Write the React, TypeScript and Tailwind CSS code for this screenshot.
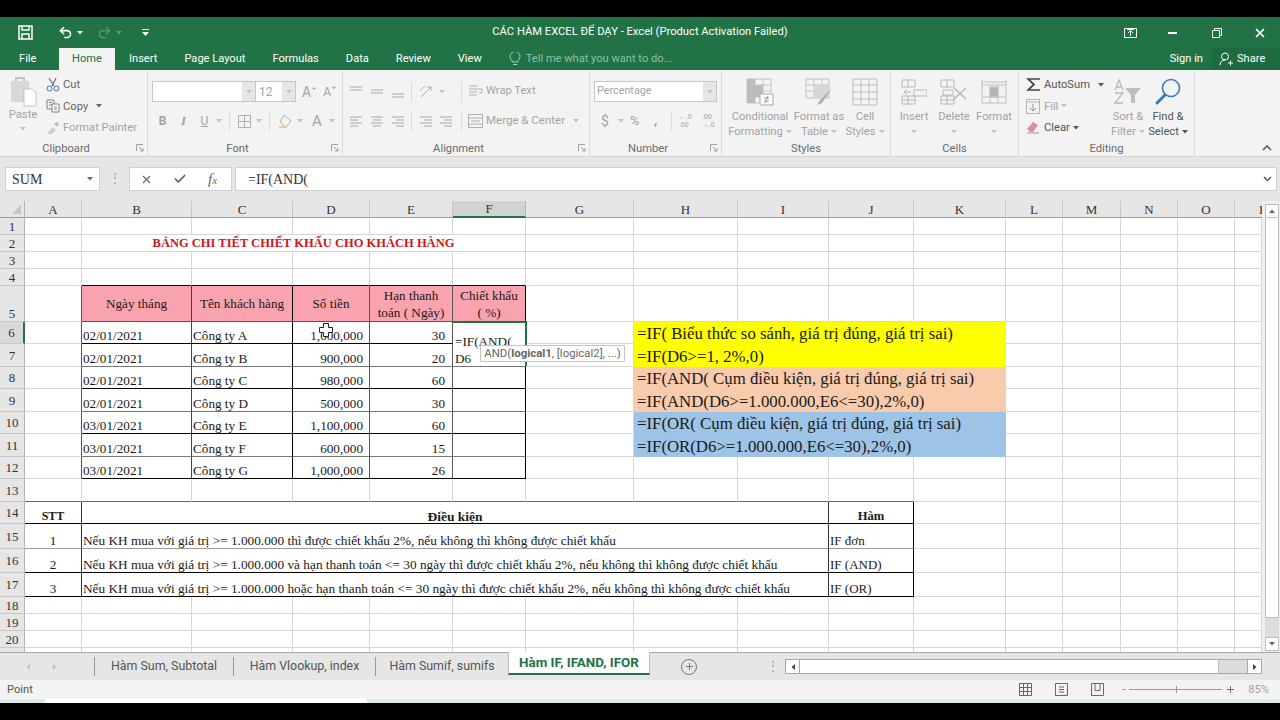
import React from "react";
import { Check, Plus, Redo2, Undo2, X } from "lucide-react";

const grid = "border-r border-b border-[#d6d6d6]";

const columns = [
  { n: "A", w: "w-[57px]" },
  { n: "B", w: "w-[110px]" },
  { n: "C", w: "w-[101px]" },
  { n: "D", w: "w-[77px]" },
  { n: "E", w: "w-[83px]" },
  { n: "F", w: "w-[73px]" },
  { n: "G", w: "w-[108px]" },
  { n: "H", w: "w-[104px]" },
  { n: "I", w: "w-[91px]" },
  { n: "J", w: "w-[85px]" },
  { n: "K", w: "w-[92px]" },
  { n: "L", w: "w-[57px]" },
  { n: "M", w: "w-[58px]" },
  { n: "N", w: "w-[57px]" },
  { n: "O", w: "w-[57px]" },
  { n: "P", w: "w-[27px]" },
];

const customers = [
  { n: 6, h: "h-[22px]", line: "border-b-black", date: "02/01/2021", name: "Công ty A", amount: "1,000,000", days: 30 },
  { n: 7, h: "h-[23px]", line: "border-b-[#777]", date: "02/01/2021", name: "Công ty B", amount: "900,000", days: 20 },
  { n: 8, h: "h-[22px]", line: "border-b-black", date: "02/01/2021", name: "Công ty C", amount: "980,000", days: 60 },
  { n: 9, h: "h-[23px]", line: "border-b-[#777]", date: "02/01/2021", name: "Công ty D", amount: "500,000", days: 30 },
  { n: 10, h: "h-[22px]", line: "border-b-black", date: "03/01/2021", name: "Công ty E", amount: "1,100,000", days: 60 },
  { n: 11, h: "h-[23px]", line: "border-b-[#777]", date: "03/01/2021", name: "Công ty F", amount: "600,000", days: 15 },
  { n: 12, h: "h-[22px]", line: "border-b-black", date: "03/01/2021", name: "Công ty G", amount: "1,000,000", days: 26 },
];

const notes: Record<number, { text: string; bg: string }> = {
  6: { text: "=IF( Biểu thức so sánh, giá trị đúng, giá trị sai)", bg: "bg-[#ffff00]" },
  7: { text: "=IF(D6>=1, 2%,0)", bg: "bg-[#ffff00]" },
  8: { text: "=IF(AND( Cụm điều kiện, giá trị đúng, giá trị sai)", bg: "bg-[#f8cbad]" },
  9: { text: "=IF(AND(D6>=1.000.000,E6<=30),2%,0)", bg: "bg-[#f8cbad]" },
  10: { text: "=IF(OR( Cụm điều kiện, giá trị đúng, giá trị sai)", bg: "bg-[#9dc3e6]" },
  11: { text: "=IF(OR(D6>=1.000.000,E6<=30),2%,0)", bg: "bg-[#9dc3e6]" },
};

const conditions = [
  { n: 15, h: "h-[25px]", line: "border-b-[#999]", stt: 1, text: "Nếu KH mua với giá trị >= 1.000.000 thì được chiết khấu 2%, nếu không thì không được chiết khấu", fn: "IF đơn" },
  { n: 16, h: "h-[24px]", line: "border-b-black", stt: 2, text: "Nếu KH mua với giá trị >= 1.000.000 và hạn thanh toán <= 30 ngày thì được chiết khấu 2%, nếu không thì không được chiết khấu", fn: "IF (AND)" },
  { n: 17, h: "h-[24px]", line: "border-b-black", stt: 3, text: "Nếu KH mua với giá trị >= 1.000.000 hoặc hạn thanh toán <= 30 ngày thì được chiết khấu 2%, nếu không thì không được chiết khấu", fn: "IF (OR)" },
];

const Caret = ({ className = "text-[#a6a6a6]" }: { className?: string }) => (
  <svg width="6" height="4" viewBox="0 0 6 4" className={`shrink-0 ${className}`}>
    <path d="M0 0h6L3 3.5z" fill="currentColor" />
  </svg>
);

const Blanks = ({ count }: { count: number }) => (
  <>
    {Array.from({ length: count }).map((_, i) => (
      <td key={i} className={grid} />
    ))}
  </>
);

const RowHead = ({ n, className = "bg-[#e6e6e6] border-r-[#b5b5b5]" }: { n: number | string; className?: string }) => (
  <th className={`font-normal text-[#333] text-[13px] leading-[15px] text-center border-r border-b border-b-[#c8c8c8] ${className}`}>
    {n}
  </th>
);

const Launcher = () => (
  <svg width="8" height="8" viewBox="0 0 8 8" className="absolute right-[3px] bottom-[4px]" fill="none" stroke="#a0a0a0">
    <path d="M.5 7V.5H7M3 3l4 4M7 4v3H4" />
  </svg>
);

const Group = ({ w, label, launcher, children }: { w: string; label: string; launcher?: boolean; children: React.ReactNode }) => (
  <div className={`${w} relative flex flex-col h-[84px] mt-[2px] border-r border-[#d9d9d9] shrink-0`}>
    <div className="flex-1 flex min-h-0">{children}</div>
    <div className={launcher ? "h-[14px] leading-[14px] text-center text-[11.2px] text-[#6b6b6b] pr-[15px]" : "h-[14px] leading-[14px] text-center text-[11.2px] text-[#6b6b6b]"}>
      {label}
    </div>
    {launcher && <Launcher />}
  </div>
);

const BigButton = ({ w, icon, lines, dim = true, arrow = false }: { w: string; icon: React.ReactNode; lines: string[]; dim?: boolean; arrow?: boolean }) => (
  <div className={`${w} flex flex-col items-center text-[11.2px] leading-[15px] ${dim ? "text-[#a3a3a3]" : "text-[#555]"}`}>
    <div className="h-[37px] pt-[2px] flex items-center justify-center shrink-0">{icon}</div>
    {lines.map((l, i) => (
      <div key={l} className="flex items-center gap-[3px] whitespace-nowrap">
        {l}
        {arrow && i === lines.length - 1 && <Caret className={dim ? "text-[#c4c4c4]" : "text-[#555]"} />}
      </div>
    ))}
    {lines.length === 1 && (
      <div className="h-[15px] flex items-center">
        <Caret className="text-[#c4c4c4]" />
      </div>
    )}
  </div>
);

const AlignIcon = ({ kind }: { kind: "top" | "mid" | "bot" | "l" | "c" | "r" }) => {
  const d = {
    top: "M1 2h12M1 5h12",
    mid: "M1 5h12M1 8h12",
    bot: "M1 9h12M1 12h12",
    l: "M1 2h12M1 5h8M1 8h12M1 11h8",
    c: "M1 2h12M3 5h8M1 8h12M3 11h8",
    r: "M1 2h12M5 5h8M1 8h12M5 11h8",
  }[kind];
  return (
    <svg width="14" height="13" viewBox="0 0 14 13" fill="none" stroke="#a8a8a8">
      <path d={d} />
    </svg>
  );
};

const Ribbon = () => (
  <div className="flex h-[87px] bg-[#f3f3f3] font-['Roboto',sans-serif] text-[#a3a3a3] border-b border-[#d4d4d4]">
    <Group w="w-[148px]" label="Clipboard" launcher>
      <div className="flex flex-col items-center w-[28px] ml-[9px] pt-[5px] text-[11.2px] leading-[16px]">
        <svg width="27" height="30" viewBox="0 0 27 30" fill="none" className="shrink-0">
          <path d="M1 4h18v21H1z" fill="#d8d8d8" />
          <path d="M6 4V1h8v3" stroke="#c4c4c4" strokeWidth="2" />
          <path d="M14 12h8l4 4v13H14z" fill="#fff" stroke="#c2c2c2" />
        </svg>
        <span>Paste</span>
        <Caret className="mt-[4px] text-[#c4c4c4]" />
      </div>
      <div className="ml-[9px] pt-[2px] flex flex-col text-[11.2px] leading-[21.5px] whitespace-nowrap">
        <div className="flex items-center gap-[3px] text-[#666]">
          <svg width="14" height="15" viewBox="0 0 14 15" fill="none">
            <path d="M3 1l5 8M10 1L6 9" stroke="#777" strokeWidth="1.3" />
            <circle cx="3.5" cy="11.5" r="2.5" stroke="#3f6fb0" />
            <circle cx="10.5" cy="11.5" r="2.5" stroke="#3f6fb0" />
          </svg>
          Cut
        </div>
        <div className="flex items-center gap-[3px] text-[#666]">
          <svg width="14" height="14" viewBox="0 0 14 14" fill="none" stroke="#808080">
            <path d="M1 1h7v9H1zM3 3.5h3M3 6h3" />
            <path d="M6 5h7v8H6z" fill="#fff" />
            <path d="M8 8h3M8 10h3" />
          </svg>
          <span>Copy</span>
          <Caret className="ml-[5px] text-[#666]" />
        </div>
        <div className="flex items-center gap-[3px]">
          <svg width="14" height="14" viewBox="0 0 14 14">
            <path d="M1 12l6-6 3 3-4 4H3z" fill="#cfcfcf" />
            <path d="M8 3l3-2 2 2-2 3z" fill="#bcbcbc" />
          </svg>
          Format Painter
        </div>
      </div>
    </Group>

    <Group w="w-[195px]" label="Font" launcher>
      <div className="flex flex-col pl-[4px] pt-[9px]">
        <div className="flex items-center h-[21px]">
          <div className="w-[104px] h-[21px] bg-white border border-[#c6c6c6] flex justify-end">
            <div className="w-[13px] bg-[#e6e6e6] flex items-center justify-center">
              <Caret className="text-[#c4c4c4]" />
            </div>
          </div>
          <div className="w-[40px] h-[21px] bg-white border border-l-0 border-[#c6c6c6] flex justify-between items-center pl-[3px] text-[12px]">
            12
            <div className="w-[13px] h-full bg-[#e6e6e6] flex items-center justify-center">
              <Caret className="text-[#c4c4c4]" />
            </div>
          </div>
          <span className="ml-[6px] text-[14px] leading-none">A</span>
          <Caret className="-mt-[8px] rotate-180 scale-75 text-[#a3a3a3]" />
          <span className="ml-[6px] text-[12px] leading-none">A</span>
          <Caret className="-mt-[8px] scale-75 text-[#a3a3a3]" />
        </div>
        <div className="flex items-center h-[22px] mt-[8px] font-bold text-[12px]">
          <span className="w-[21px] text-center">B</span>
          <span className="w-[21px] text-center italic font-['Liberation_Serif',serif] text-[13px]">I</span>
          <span className="w-[21px] text-center underline font-normal">U</span>
          <Caret className="ml-[1px] text-[#c4c4c4]" />
          <div className="w-px h-[20px] bg-[#dcdcdc] ml-[7px] mr-[8px]" />
          <svg width="13" height="13" viewBox="0 0 13 13" fill="none" stroke="#b0b0b0">
            <path d="M.5.5h12v12H.5zM6.5.5v12M.5 6.5h12" />
          </svg>
          <Caret className="ml-[5px] text-[#c4c4c4]" />
          <div className="w-px h-[20px] bg-[#dcdcdc] ml-[7px] mr-[8px]" />
          <svg width="16" height="15" viewBox="0 0 16 15" fill="none" stroke="#b0b0b0">
            <path d="M6 1l7 6-5 6-6-5z" />
            <path d="M1 13h8" stroke="#f0c9a6" strokeWidth="2" />
          </svg>
          <Caret className="ml-[3px] text-[#c4c4c4]" />
          <span className="ml-[9px] text-[15px] font-normal">A</span>
          <Caret className="ml-[7px] text-[#c4c4c4]" />
        </div>
      </div>
    </Group>

    <Group w="w-[247px]" label="Alignment" launcher>
      <div className="flex flex-col pl-[6px] pt-[9px]">
        <div className="flex items-center h-[21px]">
          <div className="flex gap-[7px]">
            <AlignIcon kind="top" />
            <AlignIcon kind="mid" />
            <AlignIcon kind="bot" />
          </div>
          <div className="w-px h-[20px] bg-[#dcdcdc] ml-[6px] mr-[7px]" />
          <svg width="15" height="15" viewBox="0 0 15 15" fill="none" stroke="#b0b0b0">
            <path d="M2 13L12 3M8 3h4v4M1 7l5-5" />
          </svg>
          <Caret className="ml-[5px] text-[#c4c4c4]" />
          <div className="w-px h-[20px] bg-[#dcdcdc] ml-[16px] mr-[6px]" />
          <svg width="15" height="13" viewBox="0 0 15 13" fill="none" stroke="#b0b0b0">
            <path d="M1 1h9M1 4h13M1 7h8M1 10h8" />
            <path d="M14 4v4h-3" />
          </svg>
          <span className="ml-[3px] text-[11.2px]">Wrap Text</span>
        </div>
        <div className="flex items-center h-[22px] mt-[8px]">
          <div className="flex gap-[7px]">
            <AlignIcon kind="l" />
            <AlignIcon kind="c" />
            <AlignIcon kind="r" />
          </div>
          <div className="w-px h-[20px] bg-[#dcdcdc] ml-[6px] mr-[7px]" />
          <div className="flex gap-[6px]">
            <AlignIcon kind="r" />
            <AlignIcon kind="r" />
          </div>
          <div className="w-px h-[20px] bg-[#dcdcdc] ml-[8px] mr-[6px]" />
          <svg width="15" height="14" viewBox="0 0 15 14" fill="none" stroke="#b0b0b0">
            <path d="M.5.5h14v13H.5zM.5 4h14M.5 10h14M3 7h9" />
          </svg>
          <span className="ml-[3px] text-[11.5px]">Merge &amp; Center</span>
          <Caret className="ml-[8px] text-[#c4c4c4]" />
        </div>
      </div>
    </Group>

    <Group w="w-[132px]" label="Number" launcher>
      <div className="flex flex-col pl-[4px] pt-[9px]">
        <div className="w-[123px] h-[21px] bg-white border border-[#c6c6c6] flex justify-between items-center pl-[2px] text-[10.8px]">
          Percentage
          <div className="w-[13px] h-full bg-[#e6e6e6] flex items-center justify-center">
            <Caret className="text-[#c4c4c4]" />
          </div>
        </div>
        <div className="flex items-center h-[22px] mt-[8px] pl-[7px] text-[13px]">
          <span className="w-[8px] text-[14px]">$</span>
          <Caret className="ml-[9px] text-[#c4c4c4]" />
          <span className="ml-[6px] w-[12px]">%</span>
          <span className="ml-[12px] w-[3px] font-bold">,</span>
          <div className="w-px h-[20px] bg-[#dcdcdc] ml-[14px] mr-[7px]" />
          <span className="text-[7px] leading-[8px] w-[15px] whitespace-nowrap">←.0<br />.00</span>
          <span className="ml-[8px] text-[7px] leading-[8px] w-[15px] whitespace-nowrap">.00<br />→.0</span>
        </div>
      </div>
    </Group>

    <Group w="w-[169px]" label="Styles">
      <BigButton
        w="w-[76px]"
        lines={["Conditional", "Formatting"]}
        arrow
        icon={
          <svg width="28" height="28" viewBox="0 0 28 28" fill="none">
            <path d="M1 1h24v24H1zM1 7h24M1 13h24M1 19h24M9 1v24M17 1v24" stroke="#c4c4c4" />
            <path d="M1 1h8v24H1zM9 7h8v12H9z" fill="#bcbcbc" />
            <path d="M14 16h13v11H14z" fill="#fff" stroke="#a8a8a8" />
            <path d="M18 20h5M18 23h5M22 18l-3 7" stroke="#999" />
          </svg>
        }
      />
      <BigButton
        w="w-[42px]"
        lines={["Format as", "Table"]}
        arrow
        icon={
          <svg width="28" height="28" viewBox="0 0 28 28" fill="none">
            <path d="M1 1h23v19H1zM1 7h23M1 13h23M9 1v19M17 1v19" stroke="#c4c4c4" />
            <path d="M9 7h15v13H9z" fill="#d6d6d6" />
            <path d="M27 10L15 22l-3 5 5-2z" fill="#b0b0b0" />
          </svg>
        }
      />
      <BigButton
        w="w-[50px]"
        lines={["Cell", "Styles"]}
        arrow
        icon={
          <svg width="26" height="28" viewBox="0 0 26 28" fill="none" stroke="#bdbdbd">
            <path d="M1 1h24v26H1zM1 7h24M1 14h24M1 21h24M9 1v26M17 1v26" />
          </svg>
        }
      />
    </Group>

    <Group w="w-[128px]" label="Cells">
      <BigButton
        w="w-[46px]"
        lines={["Insert"]}
        icon={
          <svg width="26" height="26" viewBox="0 0 26 26" fill="none" stroke="#b8b8b8">
            <path d="M1 1h13v7H1zM7 1v7M1 17h13v8H1zM1 21h13M7 17v8M13 11h13v6H13zM3 13h7M6 10l-3 3 3 3" />
          </svg>
        }
      />
      <BigButton
        w="w-[34px]"
        lines={["Delete"]}
        icon={
          <svg width="28" height="26" viewBox="0 0 28 26" fill="none" stroke="#b8b8b8">
            <path d="M1 1h13v7H1zM7 1v7M1 17h13v8H1zM1 21h13M7 17v8M3 11h10v5H3z" />
            <path d="M14 9l12 11M26 9L14 20" strokeWidth="1.6" />
          </svg>
        }
      />
      <BigButton
        w="w-[46px]"
        lines={["Format"]}
        icon={
          <svg width="26" height="28" viewBox="0 0 26 28" fill="none" stroke="#c0c0c0">
            <path d="M1 4h24M1 1v6M25 1v6M1 7h24v18H1zM9 7v18M17 7v18M1 19h24" />
            <path d="M9 9h8v10H9z" fill="#b4b4b4" />
          </svg>
        }
      />
    </Group>

    <Group w="w-[176px]" label="Editing">
      <div className="w-[86px] pl-[7px] pt-[2px] flex flex-col text-[11.2px] leading-[21.5px]">
        <div className="flex items-center text-[#555]">
          <svg width="15" height="15" viewBox="0 0 15 15" fill="none" stroke="#444" strokeWidth="1.7" className="mr-[3px]">
            <path d="M14 2H2l6 5.5L2 13h12" />
          </svg>
          AutoSum
          <Caret className="ml-[8px] text-[#555]" />
        </div>
        <div className="flex items-center">
          <svg width="14" height="15" viewBox="0 0 14 15" fill="none" stroke="#b4b4b4" className="mr-[4px]">
            <path d="M.5.5h13v14H.5zM.5 3h13" />
            <path d="M7 5v7M4 9l3 3 3-3" stroke="#7f9bb8" />
          </svg>
          Fill
          <Caret className="ml-[3px] text-[#c4c4c4]" />
        </div>
        <div className="flex items-center text-[#555]">
          <svg width="14" height="13" viewBox="0 0 14 13" className="mr-[4px]">
            <path d="M1 8l6-7 5 3-5 7H4z" fill="#e58da0" />
            <path d="M1 12h12" stroke="#999" />
          </svg>
          Clear
          <Caret className="ml-[3px] text-[#555]" />
        </div>
      </div>
      <BigButton
        w="w-[46px]"
        lines={["Sort &", "Filter"]}
        arrow
        icon={
          <svg width="28" height="26" viewBox="0 0 28 26" fill="none">
            <path d="M1 11L5 1l4 10M3 8h4M1 14h8L1 24h8" stroke="#b8b8b8" strokeWidth="1.3" />
            <path d="M11 9h16l-6 7v8h-4v-8z" fill="#bdbdbd" />
          </svg>
        }
      />
      <BigButton
        w="w-[34px]"
        lines={["Find &", "Select"]}
        dim={false}
        arrow
        icon={
          <svg width="28" height="28" viewBox="0 0 28 28" fill="none">
            <circle cx="17" cy="10" r="8.5" stroke="#3b78b8" strokeWidth="1.6" />
            <path d="M11 17l-8 8" stroke="#3b78b8" strokeWidth="3" strokeLinecap="round" />
          </svg>
        }
      />
    </Group>

    <div className="flex-1 flex items-end justify-end pb-[5px] pr-[8px]">
      <svg width="10" height="6" viewBox="0 0 10 6" fill="none" stroke="#555" strokeWidth="1.5">
        <path d="M1 5l4-4 4 4" />
      </svg>
    </div>
  </div>
);

const FormulaBar = () => (
  <div className="h-[44px] bg-[#e6e6e6] flex items-start pt-[10px] pl-[5px] pr-[3px] font-['Liberation_Serif',serif] text-[14px] text-[#333]">
    <div className="w-[95px] h-[24px] bg-white border border-[#d0d0d0] flex items-center justify-between pl-[6px] pr-[6px]">
      SUM
      <Caret className="text-[#666]" />
    </div>
    <div className="w-[29px] flex justify-center text-[#aaa] leading-[24px]">⋮</div>
    <div className="w-[103px] h-[24px] bg-white border border-[#d0d0d0] flex items-center pl-[10px] text-[#666]">
      <X size={13} />
      <Check size={14} strokeWidth={3} className="ml-[20px]" />
      <span className="ml-[21px] italic text-[15px]">
        f<span className="text-[11px]">x</span>
      </span>
    </div>
    <div className="flex-1 ml-[3px] h-[24px] bg-white border border-[#d0d0d0] flex items-center justify-between pl-[12px] pr-[4px]">
      =IF(AND(
      <svg width="9" height="6" viewBox="0 0 9 6" fill="none" stroke="#555" strokeWidth="1.5">
        <path d="M1 1l3.5 3.5L8 1" />
      </svg>
    </div>
  </div>
);

const Sheet = () => (
  <div className="h-[451px] flex bg-white overflow-hidden">
    <table className="w-[1262px] table-fixed border-separate border-spacing-0 font-['Liberation_Serif',serif] text-[13.2px] leading-[17px] text-[#1a1a1a] shrink-0 self-start">
      <colgroup>
        <col className="w-[25px]" />
        {columns.map((c) => (
          <col key={c.n} className={c.w} />
        ))}
      </colgroup>
      <thead>
        <tr className="h-[17px]">
          <th className="bg-[#e6e6e6] border-r border-b border-r-[#b5b5b5] border-b-[#9c9c9c] leading-none">
            <svg width="11" height="11" viewBox="0 0 11 11" className="ml-[11px]">
              <path d="M10 1v9H1z" fill="#c4c4c4" />
            </svg>
          </th>
          {columns.map((c) => {
            if (c.n === "F") {
              return (
                <th key={c.n} className="bg-[#d2d2d2] font-normal text-[13px] leading-none text-[#333] border-r border-b-2 border-r-[#b5b5b5] border-b-[#217346]">
                  {c.n}
                </th>
              );
            }
            if (c.n === "P") {
              // the last column runs past the scroll bar, its letter is cut in half
              return (
                <th key={c.n} className="bg-[#e6e6e6] font-normal text-[13px] leading-none text-[#333] text-left pl-[24px] overflow-hidden border-b border-b-[#9c9c9c]">
                  {c.n}
                </th>
              );
            }
            return (
              <th key={c.n} className="bg-[#e6e6e6] font-normal text-[13px] leading-none text-[#333] border-r border-b border-r-[#c6c6c6] border-b-[#9c9c9c]">
                {c.n}
              </th>
            );
          })}
        </tr>
      </thead>
      <tbody>
        <tr className="h-[17px]">
          <RowHead n={1} />
          <Blanks count={16} />
        </tr>
        <tr className="h-[17px]">
          <RowHead n={2} />
          <td className={grid} />
          <td colSpan={5} className={`${grid} text-center align-bottom font-bold text-[12.5px] leading-[16px] text-[#d0161b] whitespace-nowrap`}>
            BẢNG CHI TIẾT CHIẾT KHẤU CHO KHÁCH HÀNG
          </td>
          <Blanks count={10} />
        </tr>
        <tr className="h-[17px]">
          <RowHead n={3} />
          <Blanks count={16} />
        </tr>
        <tr className="h-[17px]">
          <RowHead n={4} />
          <td className={grid} />
          <td className="border-r border-b border-r-[#d6d6d6] border-b-black" />
          <td className="border-r border-b border-r-[#d6d6d6] border-b-black" />
          <td className="border-r border-b border-r-[#d6d6d6] border-b-black" />
          <td className="border-r border-b border-r-[#d6d6d6] border-b-black" />
          <td className="border-r border-b border-r-[#d6d6d6] border-b-black" />
          <Blanks count={10} />
        </tr>
        <tr className="h-[36px]">
          <RowHead n={5} className="bg-[#e6e6e6] border-r-[#b5b5b5] align-bottom" />
          <td className="border-r border-b border-r-[#555] border-b-[#d6d6d6]" />
          <td className="bg-[#f9a3ae] text-center border-r border-b border-r-[#444] border-b-[#555]">Ngày tháng</td>
          <td className="bg-[#f9a3ae] text-center border-r border-b border-r-black border-b-[#555]">Tên khách hàng</td>
          <td className="bg-[#f9a3ae] text-center border-r border-b border-r-[#555] border-b-[#555]">Số tiền</td>
          <td className="bg-[#f9a3ae] text-center border-r border-b border-r-[#555] border-b-[#555]">
            Hạn thanh
            <br />
            toán ( Ngày)
          </td>
          <td className="bg-[#f9a3ae] text-center border-r border-b border-r-black border-b-[#217346]">
            Chiết khấu
            <br />( %)
          </td>
          <Blanks count={10} />
        </tr>
        {customers.map((r) => (
          <tr key={r.n} className={r.h}>
            <RowHead n={r.n} className={r.n === 6 ? "bg-[#d9d9d9] border-r-2 border-r-[#217346]" : "bg-[#e6e6e6] border-r-[#b5b5b5]"} />
            <td className="border-r border-b border-r-[#555] border-b-[#d6d6d6]" />
            <td className={`align-bottom pl-[1px] leading-[14px] whitespace-nowrap border-r border-b border-r-[#444] ${r.line}`}>{r.date}</td>
            <td className={`align-bottom pl-[1px] leading-[14px] whitespace-nowrap border-r border-b border-r-black ${r.line}`}>{r.name}</td>
            <td className={`relative align-bottom text-right pr-[6px] leading-[14px] whitespace-nowrap border-r border-b border-r-[#555] ${r.line}`}>
              {r.amount}
              {r.n === 6 && (
                <svg width="14" height="14" viewBox="0 0 14 14" className="absolute left-[26px] top-[1px]">
                  <path d="M4.5.5h5v4h4v5h-4v4h-5v-4h-4v-5h4z" fill="#fff" stroke="#222" />
                </svg>
              )}
            </td>
            <td className={`align-bottom text-right pr-[7px] leading-[14px] whitespace-nowrap border-r border-b border-r-[#555] ${r.line}`}>{r.days}</td>
            <td className={`relative border-r border-b border-r-black ${r.line}`}>
              {r.n === 6 && (
                <>
                  <div className="absolute left-0 top-[-1px] w-[74px] h-[45px] z-10 bg-white border-t-2 border-r-2 border-[#217346] pt-[10px] pl-[2px] leading-[17px] whitespace-nowrap">
                    =IF(AND(
                    <br />
                    D6
                  </div>
                  <div className="absolute left-[27px] top-[23px] z-20 w-[145px] h-[17px] bg-white border border-[#c4c4c4] rounded-[1px] font-['Roboto',sans-serif] text-[11.4px] leading-[15px] text-center text-[#666] whitespace-nowrap">
                    AND(<b>logical1</b>, [logical2], ...)
                  </div>
                </>
              )}
            </td>
            <td className={grid} />
            {notes[r.n] ? (
              <td colSpan={4} className={`${notes[r.n].bg} pl-[3px] align-bottom text-[16.8px] leading-[20px] whitespace-nowrap`}>
                {notes[r.n].text}
              </td>
            ) : (
              <Blanks count={4} />
            )}
            <Blanks count={5} />
          </tr>
        ))}
        <tr className="h-[23px]">
          <RowHead n={13} />
          <td className="border-r border-b border-r-[#d6d6d6] border-b-[#666]" />
          <td className="border-r border-b border-r-[#d6d6d6] border-b-[#666]" />
          <td className="border-r border-b border-r-[#d6d6d6] border-b-[#666]" />
          <td className="border-r border-b border-r-[#d6d6d6] border-b-[#666]" />
          <td className="border-r border-b border-r-[#d6d6d6] border-b-[#666]" />
          <td className="border-r border-b border-r-[#d6d6d6] border-b-[#666]" />
          <td className="border-r border-b border-r-[#d6d6d6] border-b-[#666]" />
          <td className="border-r border-b border-r-[#d6d6d6] border-b-[#666]" />
          <td className="border-r border-b border-r-[#d6d6d6] border-b-[#666]" />
          <td className="border-r border-b border-r-[#d6d6d6] border-b-[#666]" />
          <Blanks count={6} />
        </tr>
        <tr className="h-[22px]">
          <RowHead n={14} />
          <td className="align-bottom text-center font-bold text-[12px] leading-[13px] border-r border-b border-r-[#333] border-b-black">STT</td>
          <td colSpan={8} className="align-bottom text-center font-bold text-[13.5px] leading-[13px] border-r border-b border-r-[#333] border-b-black">
            Điều kiện
          </td>
          <td className="align-bottom text-center font-bold text-[12.6px] leading-[13px] border-r border-b border-r-black border-b-black">Hàm</td>
          <Blanks count={6} />
        </tr>
        {conditions.map((r) => (
          <tr key={r.n} className={r.h}>
            <RowHead n={r.n} />
            <td className={`align-bottom text-center leading-[14px] border-r border-b border-r-[#333] ${r.line}`}>{r.stt}</td>
            <td colSpan={8} className={`align-bottom pl-[1px] text-[13.3px] leading-[14px] whitespace-nowrap border-r border-b border-r-[#333] ${r.line}`}>
              {r.text}
            </td>
            <td className={`align-bottom pl-[1px] text-[13px] leading-[14px] whitespace-nowrap border-r border-b border-r-black ${r.line}`}>{r.fn}</td>
            <Blanks count={6} />
          </tr>
        ))}
        {[18, 19, 20, ""].map((n) => (
          <tr key={n} className="h-[17px]">
            <RowHead n={n} />
            <Blanks count={16} />
          </tr>
        ))}
      </tbody>
    </table>

    <div className="flex-1 flex flex-col pl-[3px] pr-px pt-[3px] pb-[1px] bg-[#f0f0f0]">
      <div className="h-[14px] bg-white border border-[#bdbdbd] flex items-center justify-center">
        <Caret className="rotate-180 text-[#666]" />
      </div>
      <div className="h-[400px] bg-white border-x border-b border-[#bdbdbd]" />
      <div className="flex-1 bg-[#dcdcdc]" />
      <div className="h-[14px] bg-white border border-[#bdbdbd] flex items-center justify-center">
        <Caret className="text-[#666]" />
      </div>
    </div>
  </div>
);

const sheets = [
  { name: "Hàm Sum, Subtotal", w: "w-[139px]" },
  { name: "Hàm Vlookup, index", w: "w-[142px]" },
  { name: "Hàm Sumif, sumifs", w: "w-[133px]" },
];

const Tabs = () => (
  <div className="h-[28px] bg-[#e6e6e6] border-t border-[#a8a8a8] flex font-['Roboto',sans-serif] text-[12.4px] text-[#555]">
    <div className="w-[94px] flex items-center pl-[25px] gap-[21px] shrink-0">
      <Caret className="rotate-90 text-[#c4c4c4]" />
      <Caret className="-rotate-90 text-[#c4c4c4]" />
    </div>
    {sheets.map((s) => (
      <div key={s.name} className={`${s.w} my-[4px] border-l border-[#9a9a9a] text-center leading-[17px] whitespace-nowrap shrink-0`}>
        {s.name}
      </div>
    ))}
    <div className="w-[142px] h-[23px] -mt-px bg-white border-x border-b-2 border-x-[#bdbdbd] border-b-[#217346] text-center text-[13.4px] leading-[22px] font-bold text-[#217346] whitespace-nowrap shrink-0">
      Hàm IF, IFAND, IFOR
    </div>
    <div className="w-[135px] flex items-center pl-[31px] shrink-0">
      <div className="w-[16px] h-[16px] rounded-full border border-[#777] flex items-center justify-center shrink-0">
        <Plus size={11} className="text-[#777]" />
      </div>
      <span className="ml-[69px] text-[#aaa] text-[14px]">⋮</span>
    </div>
    <div className="w-[477px] h-[15px] mt-[6px] flex border border-[#a8a8a8] bg-white shrink-0">
      <div className="w-[14px] border-r border-[#a8a8a8] flex items-center justify-center">
        <Caret className="rotate-90 text-[#444]" />
      </div>
      <div className="w-[419px] border-r border-[#bdbdbd]" />
      <div className="flex-1 bg-[#dcdcdc]" />
      <div className="w-[14px] border-l border-[#a8a8a8] flex items-center justify-center">
        <Caret className="-rotate-90 text-[#444]" />
      </div>
    </div>
  </div>
);

const StatusBar = () => (
  <div className="h-[19px] bg-[#f3f3f3] flex items-center font-['Roboto',sans-serif] text-[11.2px] leading-[15px] text-[#555] pl-[7px]">
    Point
    <div className="ml-auto flex items-center">
      <svg width="13" height="13" viewBox="0 0 13 13" fill="none" stroke="#666">
        <path d="M.5.5h12v12H.5zM.5 4.5h12M.5 8.5h12M4.5.5v12M8.5.5v12" />
      </svg>
      <svg width="13" height="13" viewBox="0 0 13 13" fill="none" stroke="#666" className="ml-[23px]">
        <path d="M.5.5h12v12H.5zM4 4h5M4 6.5h5M4 9h5" />
      </svg>
      <svg width="13" height="13" viewBox="0 0 13 13" fill="none" stroke="#666" className="ml-[23px]">
        <path d="M.5.5h12v12H.5zM4 .5v7h5v-7" />
      </svg>
      <span className="ml-[18px] text-[#888]">-</span>
      <div className="relative ml-[4px] w-[93px] h-px bg-[#999]">
        <div className="absolute left-[47px] top-[-3px] w-px h-[7px] bg-[#999]" />
      </div>
      <Plus size={11} className="ml-[3px] text-[#666]" />
      <span className="ml-[12px] mr-[11px] text-[#a3a3a3]">85%</span>
    </div>
  </div>
);

const menu = ["Insert", "Page Layout", "Formulas", "Data", "Review", "View"];

export default function App() {
  return (
    <div className="w-[1280px] h-[720px] bg-black overflow-hidden pt-[17px]">
      <div className="h-[31px] bg-[#217346] grid grid-cols-[1fr_auto_1fr] items-center font-['Roboto',sans-serif] text-[11.2px] text-white">
        <div className="flex items-center">
          <svg width="15" height="15" viewBox="0 0 15 15" fill="none" stroke="#fff" strokeWidth="1.5" className="ml-[18px]">
            <path d="M1 1h13v13H1zM4 1v4h7V1M4 14V9h7v5" />
          </svg>
          <Undo2 size={15} strokeWidth={2.5} className="ml-[25px]" />
          <Caret className="ml-[4px] text-white" />
          <Redo2 size={15} className="ml-[14px] text-[#5c9a78]" />
          <Caret className="ml-[4px] text-[#5c9a78]" />
          <svg width="7" height="7" viewBox="0 0 7 7" fill="#fff" className="ml-[20px]">
            <path d="M0 0h7v1H0zM0 3h7L3.5 7z" />
          </svg>
        </div>
        <div className="whitespace-nowrap">CÁC HÀM EXCEL ĐỂ DẠY - Excel (Product Activation Failed)</div>
        <div className="flex items-center justify-end">
          <svg width="13" height="10" viewBox="0 0 13 10" fill="none" stroke="#fff" className="mr-[31px]">
            <path d="M.5.5h12v9H.5zM6.5 8V3M4 5l2.5-2.5L9 5M3 1.5h7" />
          </svg>
          <svg width="10" height="2" viewBox="0 0 10 2" fill="#fff" className="mr-[34px]">
            <path d="M0 0h9v2H0z" />
          </svg>
          <svg width="10" height="10" viewBox="0 0 10 10" fill="none" stroke="#fff" className="mr-[31px]">
            <path d="M.5 2.5h7v7h-7zM2.5 2.5v-2h7v7h-2" />
          </svg>
          <X size={14} strokeWidth={3} className="mr-[13px]" />
        </div>
      </div>

      <div className="h-[22px] bg-[#217346] flex items-end font-['Roboto',sans-serif] text-[11.1px] leading-[22px] text-white whitespace-nowrap">
        <div className="ml-[19px] w-[40px] h-[22px]">File</div>
        <div className="w-[56px] h-[22px] bg-[#f3f3f3] text-center text-[#217346]">Home</div>
        <div className="w-[14px] shrink-0" />
        {menu.map((m) => (
          <div key={m} className="mr-[27px] h-[22px]">
            {m}
          </div>
        ))}
        <div className="h-[22px] flex items-center text-[#8fbfa4]">
          <svg width="12" height="14" viewBox="0 0 12 14" fill="none" stroke="#a9d0ba" className="mr-[5px]">
            <path d="M3.5 10C3 8 1 7 1 4.5a5 5 0 0 1 10 0C11 7 9 8 8.5 10zM4 12.5h4" />
          </svg>
          Tell me what you want to do...
        </div>
        <div className="ml-auto h-[22px]">Sign in</div>
        <div className="ml-[9px] w-[68px] h-[22px] bg-[#1e6b41] flex items-center pl-[7px]">
          <svg width="14" height="14" viewBox="0 0 14 14" fill="none" stroke="#fff" className="mr-[4px]">
            <circle cx="6" cy="4.5" r="3.5" />
            <path d="M1 13c0-3 2-5 5-5M9 11h5M11.5 8.5v5" />
          </svg>
          Share
        </div>
      </div>

      <Ribbon />
      <FormulaBar />
      <Sheet />
      <Tabs />
      <StatusBar />
      <div className="h-[4px] bg-[#dfe8e8] flex">
        <div className="ml-[45px] w-[322px] bg-white" />
      </div>
    </div>
  );
}
